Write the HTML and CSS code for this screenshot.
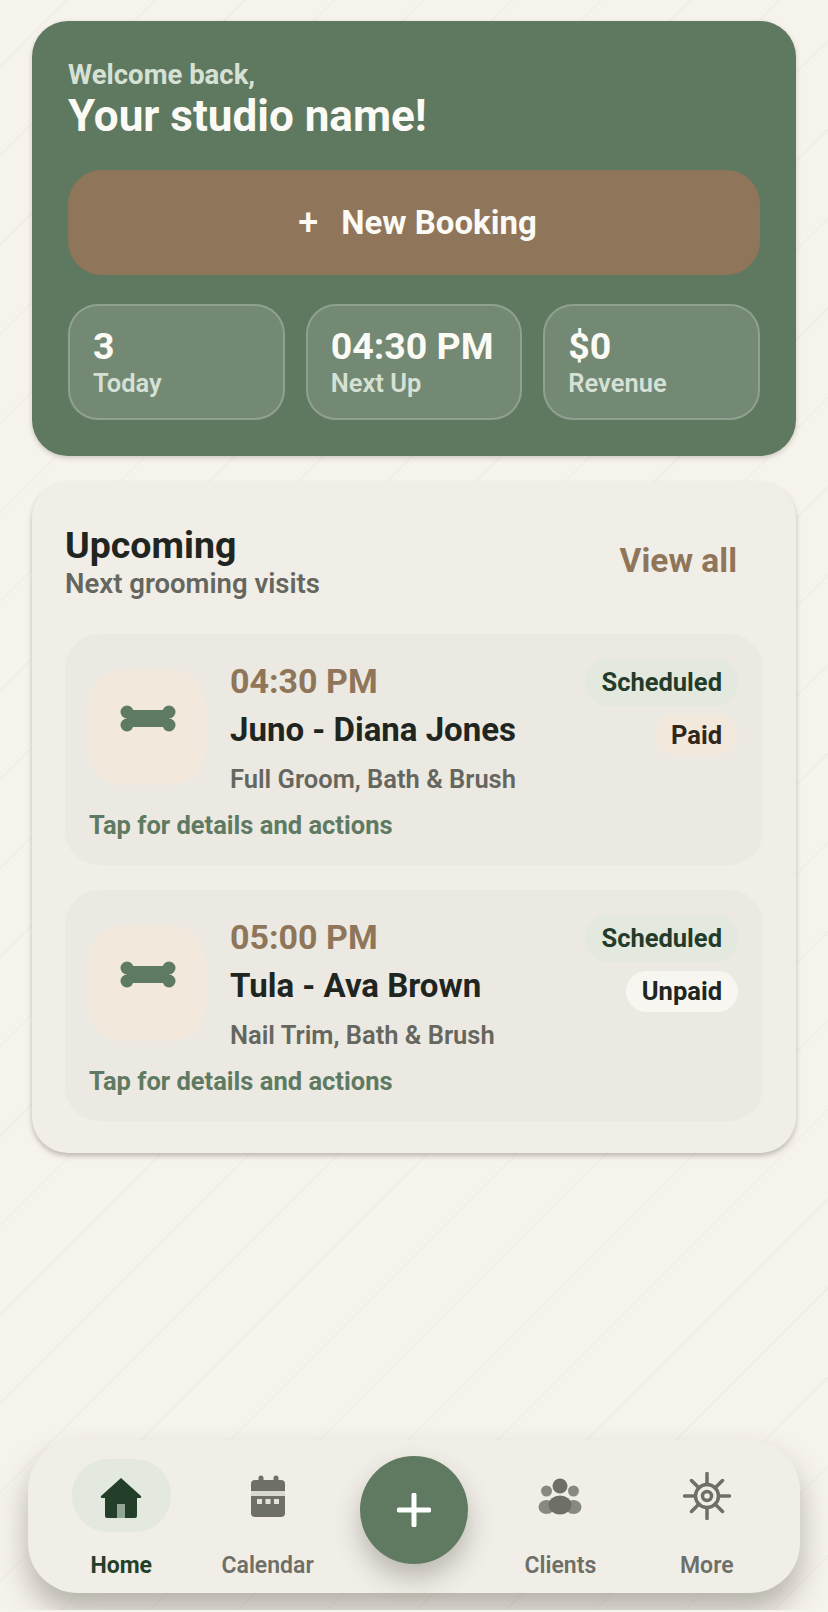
FILE: index.html
```html
<!DOCTYPE html>
<html lang="en">
<head>
<meta charset="utf-8">
<title>Studio Home</title>
<link rel="stylesheet" href="styles.css">
</head>
<body>
<div class="page">
  <main class="content">
    <section class="hero">
      <div class="welcome">Welcome back,</div>
      <h1 class="studio">Your studio name!</h1>
      <button class="new-booking"><span class="plus">+</span><span>New Booking</span></button>
      <div class="stats">
        <div class="stat"><div class="stat-value">3</div><div class="stat-label">Today</div></div>
        <div class="stat"><div class="stat-value">04:30 PM</div><div class="stat-label">Next Up</div></div>
        <div class="stat"><div class="stat-value">$0</div><div class="stat-label">Revenue</div></div>
      </div>
    </section>

    <section class="card">
      <header class="card-head">
        <div>
          <h2 class="card-title">Upcoming</h2>
          <div class="card-sub">Next grooming visits</div>
        </div>
        <a class="view-all">View all</a>
      </header>

      <article class="visit">
        <div class="visit-row">
          <div class="pet-icon">
            <svg class="bone" viewBox="0 0 56 27"><rect x="7" y="5" width="42" height="17" fill="#5f7a62"/><circle cx="7" cy="7" r="6.5" fill="#5f7a62"/><circle cx="7" cy="20" r="6.5" fill="#5f7a62"/><circle cx="49" cy="7" r="6.5" fill="#5f7a62"/><circle cx="49" cy="20" r="6.5" fill="#5f7a62"/></svg>
          </div>
          <div class="visit-main">
            <div class="visit-time">04:30 PM</div>
            <div class="visit-name">Juno - Diana Jones</div>
            <div class="visit-service">Full Groom, Bath &amp; Brush</div>
          </div>
          <div class="badges">
            <span class="badge badge-status">Scheduled</span>
            <span class="badge badge-paid">Paid</span>
          </div>
        </div>
        <div class="visit-hint">Tap for details and actions</div>
      </article>

      <article class="visit">
        <div class="visit-row">
          <div class="pet-icon">
            <svg class="bone" viewBox="0 0 56 27"><rect x="7" y="5" width="42" height="17" fill="#5f7a62"/><circle cx="7" cy="7" r="6.5" fill="#5f7a62"/><circle cx="7" cy="20" r="6.5" fill="#5f7a62"/><circle cx="49" cy="7" r="6.5" fill="#5f7a62"/><circle cx="49" cy="20" r="6.5" fill="#5f7a62"/></svg>
          </div>
          <div class="visit-main">
            <div class="visit-time">05:00 PM</div>
            <div class="visit-name">Tula - Ava Brown</div>
            <div class="visit-service">Nail Trim, Bath &amp; Brush</div>
          </div>
          <div class="badges">
            <span class="badge badge-status">Scheduled</span>
            <span class="badge badge-unpaid">Unpaid</span>
          </div>
        </div>
        <div class="visit-hint">Tap for details and actions</div>
      </article>
    </section>
  </main>

  <nav class="nav">
    <a class="nav-item active">
      <span class="nav-icon">
        <svg class="ico" viewBox="0 0 48 48"><path d="M24 6 L44 24 Q45 26 42 26 L40 26 L40 44 Q40 46 38 46 L10 46 Q8 46 8 44 L8 26 L6 26 Q3 26 4 24 Z" fill="#233f29"/><rect x="20" y="32" width="8" height="14" fill="#93a695"/></svg>
      </span>
      <span class="nav-label">Home</span>
    </a>
    <a class="nav-item">
      <span class="nav-icon">
        <svg class="ico" viewBox="0 0 48 48"><path d="M11 8 h26 a4 4 0 0 1 4 4 v7 H7 v-7 a4 4 0 0 1 4-4 Z" fill="#6e6f67"/><rect x="7" y="19" width="34" height="5" fill="#d9d8d1"/><path d="M7 24 H41 V41 a4 4 0 0 1-4 4 H11 a4 4 0 0 1-4-4 Z" fill="#6e6f67"/><rect x="13" y="27" width="5" height="5" fill="#e4e2db"/><rect x="21.500" y="27" width="5" height="5" fill="#e4e2db"/><rect x="30" y="27" width="5" height="5" fill="#e4e2db"/><path d="M17 6 V16 M32 6 V16" stroke="#6e6f67" stroke-width="5" stroke-linecap="round"/></svg>
      </span>
      <span class="nav-label">Calendar</span>
    </a>
    <span class="nav-gap"></span>
    <a class="nav-item">
      <span class="nav-icon">
        <svg class="ico" viewBox="0 0 48 48"><circle cx="24" cy="14" r="7.500" fill="#6e6f67"/><circle cx="10.500" cy="19" r="5.500" fill="#6e6f67" opacity=".8"/><circle cx="37.500" cy="19" r="5.500" fill="#6e6f67" opacity=".8"/><ellipse cx="10.500" cy="35" rx="8" ry="7" fill="#6e6f67" opacity=".8"/><ellipse cx="37.500" cy="35" rx="8" ry="7" fill="#6e6f67" opacity=".8"/><ellipse cx="24" cy="33" rx="11.500" ry="9.500" fill="#6e6f67"/></svg>
      </span>
      <span class="nav-label">Clients</span>
    </a>
    <a class="nav-item">
      <span class="nav-icon">
        <svg class="ico" viewBox="0 0 48 48" fill="none" stroke="#6e6f67"><circle cx="24" cy="24" r="11.500" stroke-width="3.500"/><circle cx="24" cy="24" r="4.500" stroke-width="3.500"/><path d="M24 1.500 V12 M24 36 V46.500 M1.500 24 H12 M36 24 H46.500 M8.500 8.500 L16 16 M39.500 8.500 L32 16 M8.500 39.500 L16 32 M39.500 39.500 L32 32" stroke-width="3.500" stroke-linecap="round"/></svg>
      </span>
      <span class="nav-label">More</span>
    </a>
    <button class="fab" aria-label="Add">
      <svg class="fab-plus" viewBox="0 0 34 34"><path d="M17 2 V32 M2 17 H32" stroke="#fff" stroke-width="5" stroke-linecap="round"/></svg>
    </button>
  </nav>
</div>
</body>
</html>
```

FILE: styles.css
```css
* { box-sizing: border-box; margin: 0; padding: 0; }

html, body {
  width: 828px;
  height: 1612px;
  background: #f6f3ec;
  font-family: Roboto, "Liberation Sans", sans-serif;
  overflow: hidden;
}

.page {
  height: 1610px;
  overflow: hidden;
  display: flex;
  flex-direction: column;
  background-color: #f6f3ec;
  background-image: repeating-linear-gradient(135deg, transparent 0, transparent 46.500px, #f0ede6 46.500px, #f0ede6 48px, transparent 48px, transparent 63px);
}

.content {
  padding: 21px 32px 0;
  display: flex;
  flex-direction: column;
  gap: 26px;
}

/* Hero */
.hero {
  height: 435px;
  background: #5f7860;
  border-radius: 36px;
  padding: 39px 36px 0;
  box-shadow: 0 2px 5px rgba(60, 55, 45, .22);
}
.welcome {
  font-size: 27.500px;
  line-height: 30px;
  font-weight: 700;
  color: #d6e1d6;
}
.studio {
  font-size: 44px;
  line-height: 52px;
  font-weight: 700;
  color: #fbfaf5;
}
.new-booking {
  margin-top: 28px;
  width: 100%;
  height: 105px;
  border: 0;
  border-radius: 34px;
  background: #8f7559;
  color: #fbfaf5;
  font: 700 33px/1 Roboto, "Liberation Sans", sans-serif;
  display: flex;
  align-items: center;
  justify-content: center;
  gap: 23px;
  padding-left: 7px;
}
.plus { font-weight: 500; font-size: 36px; }
.stats {
  margin-top: 29px;
  display: grid;
  grid-template-columns: repeat(3, 1fr);
  gap: 21px;
}
.stat {
  height: 116px;
  padding: 19px 23px 0;
  border-radius: 30px;
  background: rgba(255, 255, 255, .13);
  border: 2px solid rgba(255, 255, 255, .2);
}
.stat-value {
  font-size: 37.500px;
  line-height: 42px;
  font-weight: 700;
  color: #fbfaf5;
}
.stat-label {
  font-size: 25.500px;
  line-height: 32px;
  font-weight: 600;
  color: #d6e1d6;
}

/* Upcoming card */
.card {
  height: 671px;
  background: #f1eee8;
  border-radius: 36px;
  padding: 41px 33px 0;
  box-shadow: 0 3px 5px rgba(60, 55, 45, .3);
}
.card-head {
  display: flex;
  align-items: center;
  justify-content: space-between;
  padding-right: 26px;
}
.card-title {
  font-size: 37.500px;
  line-height: 45px;
  font-weight: 700;
  color: #20261f;
}
.card-sub {
  font-size: 27.500px;
  line-height: 32px;
  font-weight: 600;
  color: #65675f;
}
.view-all {
  font-size: 33.500px;
  font-weight: 700;
  color: #8f7559;
  margin-top: -2px;
}

.visit {
  height: 231px;
  margin-top: 34px;
  border-radius: 34px;
  background: #ece9e2;
  padding: 25px 25px 0;
}
.visit + .visit { margin-top: 25px; }
.visit-row {
  display: flex;
  gap: 25px;
  align-items: flex-start;
}
.pet-icon {
  width: 115px;
  height: 115px;
  flex: none;
  margin-top: 11px;
  border-radius: 34px;
  background: #f2e8db;
  display: flex;
  align-items: flex-start;
  justify-content: center;
  padding-top: 35px;
}
.bone { width: 56px; height: 27px; display: block; }
.visit-main { flex: 1; min-width: 0; }
.visit-time {
  font-size: 34px;
  line-height: 44px;
  font-weight: 700;
  color: #8f7559;
}
.visit-name {
  font-size: 33px;
  line-height: 44px;
  margin-top: 5px;
  font-weight: 700;
  color: #20261f;
}
.visit-service {
  font-size: 25.500px;
  line-height: 32px;
  margin-top: 11px;
  font-weight: 600;
  color: #65675f;
}
.visit-hint {
  font-size: 25.500px;
  line-height: 32px;
  margin: 14px 0 0 -1px;
  font-weight: 700;
  color: #5f7a62;
}
.badges {
  display: flex;
  flex-direction: column;
  align-items: flex-end;
  gap: 9px;
}
.badge {
  font-size: 25.500px;
  line-height: 30px;
  font-weight: 700;
  padding: 8px 16px 9px;
  border-radius: 23px;
}
.badge-status { background: #e3e9df; color: #243b2b; }
.badge-paid { background: #f2e8db; color: #33261a; padding: 5px 16px; }
.badge-unpaid { background: #f8f6f0; color: #20261f; padding: 5px 16px 6px; }

/* Bottom nav */
.nav {
  position: relative;
  margin: auto 28px 17px;
  height: 153px;
  padding: 0 20px;
  border-radius: 50px;
  background: #f1eee8;
  box-shadow: 0 18px 30px rgba(60, 55, 45, .34);
  display: grid;
  grid-template-columns: repeat(5, 1fr);
}
.nav-item {
  display: flex;
  flex-direction: column;
  align-items: center;
  padding-top: 19px;
}
.nav-icon {
  width: 99px;
  height: 73px;
  border-radius: 36px;
  display: flex;
  align-items: center;
  justify-content: center;
}
.active .nav-icon { background: #e3e9df; }
.ico { width: 48px; height: 48px; display: block; }
.nav-label {
  margin-top: 18px;
  font-size: 23px;
  line-height: 32px;
  font-weight: 600;
  color: #6e6f67;
}
.active .nav-label { font-weight: 700; color: #233f29; }
.fab {
  position: absolute;
  left: 332px;
  top: 16px;
  width: 108px;
  height: 108px;
  border: 0;
  border-radius: 50%;
  background: #5f7a60;
  box-shadow: 0 14px 26px rgba(60, 55, 45, .3);
  display: flex;
  align-items: center;
  justify-content: center;
}
.fab-plus { width: 34px; height: 34px; display: block; }
```
